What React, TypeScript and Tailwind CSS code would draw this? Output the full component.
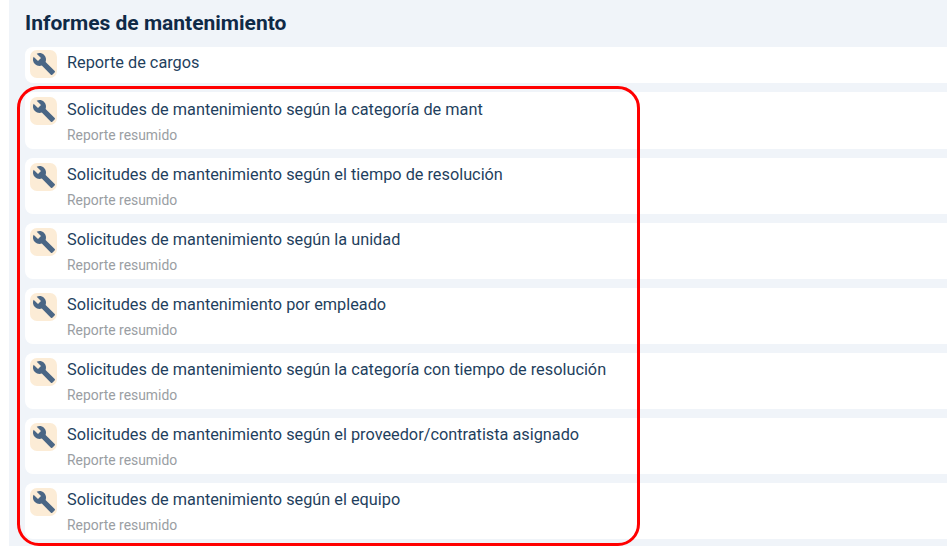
import { MdBuild } from 'react-icons/md';

const reports = [
  'Solicitudes de mantenimiento según la categoría de mant',
  'Solicitudes de mantenimiento según el tiempo de resolución',
  'Solicitudes de mantenimiento según la unidad',
  'Solicitudes de mantenimiento por empleado',
  'Solicitudes de mantenimiento según la categoría con tiempo de resolución',
  'Solicitudes de mantenimiento según el proveedor/contratista asignado',
  'Solicitudes de mantenimiento según el equipo',
];

function ReportIcon() {
  return (
    <div className="flex h-[28px] w-[27px] shrink-0 items-center justify-center rounded-[7px] bg-[#fcecd6]">
      <MdBuild className="h-[24px] w-[24px] text-[#4a6685]" />
    </div>
  );
}

export default function App() {
  return (
    <div className="relative h-[550px] w-[949px] overflow-hidden bg-white font-['Roboto',sans-serif]">
      <div className="ml-[9px] h-[546px] w-[938px] bg-[#f0f4f9] pl-[16px]">
        <h1 className="h-[47px] pt-[10px] text-[21px] leading-[26px] font-bold text-[#0f2a47]">
          Informes de mantenimiento
        </h1>
        <div className="flex flex-col gap-[9px]">
          <div className="flex h-[36px] gap-[10px] rounded-l-[8px] bg-white pt-[3px] pl-[5px]">
            <ReportIcon />
            <p className="mt-[1px] text-[16.3px] leading-[24px] text-[#1f3f5e]">Reporte de cargos</p>
          </div>
          {reports.map((title, i) => (
            <div
              key={title}
              className={`flex gap-[10px] rounded-l-[8px] bg-white pt-[5px] pl-[5px] ${i === 0 ? 'h-[57px]' : 'h-[56px]'}`}
            >
              <ReportIcon />
              <div className={i === 0 ? 'pt-[1px]' : ''}>
                <p className="text-[16.3px] leading-[24px] text-[#1f3f5e]">{title}</p>
                <p className="mt-[3px] text-[13.9px] leading-[20px] text-[#9a9ea3]">Reporte resumido</p>
              </div>
            </div>
          ))}
        </div>
      </div>
      <div className="absolute top-[86px] left-[17px] h-[460px] w-[623px] rounded-[22px] border-[3px] border-[#ff0000]" />
    </div>
  );
}
